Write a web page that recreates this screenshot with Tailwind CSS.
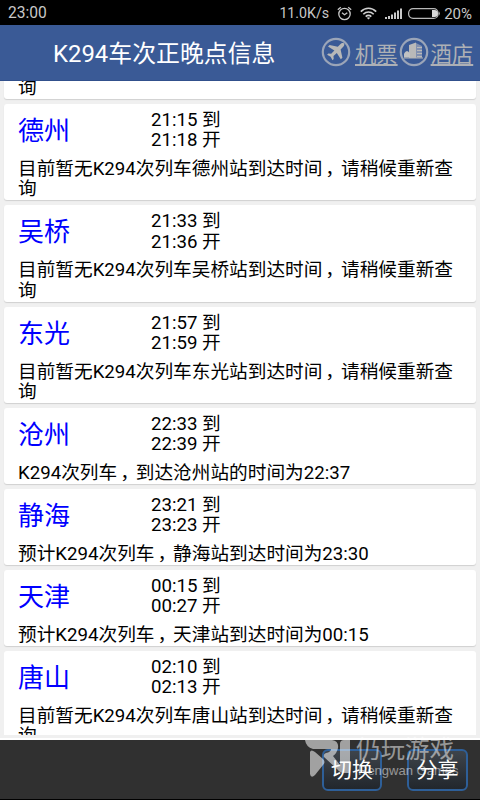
<!DOCTYPE html>
<html lang="zh-CN">
<head>
  <meta charset="UTF-8" />
  <meta name="viewport" content="width=device-width, initial-scale=1.0"/>
  <title>K294车次正晚点信息</title>
  <script src="https://cdn.jsdelivr.net/npm/@tailwindcss/browser@4"></script>
</head>
<body class="bg-black font-['Roboto','Noto_Sans_CJK_SC',sans-serif]">
  <div class="w-[480px] h-[800px] flex flex-col overflow-hidden relative">

    <!-- Status bar -->
    <div class="h-[25px] shrink-0 bg-black text-[#c8c8c8] flex items-center justify-between pl-2 pr-2 pt-[3px] text-[15px]">
      <span class="text-[15.600px]">23:00</span>
      <div class="flex items-center">
        <span class="mr-2 text-[14.200px]">11.0K/s</span>
        <svg class="w-[15px] h-[15px] mr-2 mb-0.5" viewBox="0 0 15 15" fill="none" stroke="#c8c8c8" stroke-width="1.3">
          <circle cx="7.5" cy="8" r="5.7"/>
          <path d="M5 6.8l2.5 2 2.8-2M.8 3.8L3.8 1.2M14.2 3.8l-3-2.6"/>
        </svg>
        <svg class="w-[17px] h-[13px] mr-2 mb-0.5" viewBox="0 0 17 13" fill="none" stroke="#d0d0d0" stroke-width="1.6">
          <path d="M.8 4.6c4.4-4.4 11-4.4 15.4 0M3.3 7.2c3-3 7.4-3 10.4 0M5.7 9.6c1.6-1.6 4-1.6 5.6 0"/>
          <path d="M8.5 12.6L6.7 10.8Q8.5 9.6 10.3 10.8Z" fill="#d0d0d0" stroke="none"/>
        </svg>
        <svg class="w-[17px] h-[11px] mr-1.5 mb-0.5" viewBox="0 0 17 11" fill="#c8c8c8">
          <path d="M0 9h2v2H0zM3 8h2v3H3zM6 6.5h2V11H6zM9 4.5h2V11H9zM12 2.5h2V11h-2zM15 .5h2V11h-2z"/>
        </svg>
        <svg class="w-8 h-[11px] mr-1 mb-0.5" viewBox="0 0 32 11">
          <rect x=".6" y=".6" width="29.5" height="9.8" rx="4.5" fill="none" stroke="#b8b8b8" stroke-width="1.2"/>
          <path d="M24 2h2.5a3.5 3.5 0 0 1 0 7H24z" fill="#d8d8d8"/>
          <path d="M31 3.5q1.5 2 0 4z" fill="#b8b8b8"/>
        </svg>
        <span>20%</span>
      </div>
    </div>

    <!-- Title bar -->
    <header class="h-14 shrink-0 bg-[#3a5a96] border-b border-[#31508c] flex items-center pl-[53px]">
      <h1 class="w-[268px] mt-0.5 text-[23.900px] leading-9 text-white whitespace-nowrap">K294车次正晚点信息</h1>
      <svg class="w-[30px] h-[30px] mb-0.5 shrink-0" viewBox="0 0 30 30">
        <circle cx="15" cy="15" r="13.2" fill="none" stroke="#9ba5b8" stroke-width="2.2"/>
        <path d="M23 6.5c-1-.9-2.7-.2-3.7.8L16.800 9.7 8.6 7.9 7 9.5l6.4 4-3.2 3.300-2.900-.2-1.200 1.200 3.500 1.900 1.900 3.500 1.200-1.200-.2-2.900 3.300-3.200 4 6.400 1.600-1.600-1.800-8.200 2.400-2.500c1-1 1.800-2.600 1-3.500z" fill="#b8b8b8"/>
      </svg>
      <a class="ml-1 mt-[5px] text-[21.300px] text-[#adb0b5] underline decoration-[1.500px] underline-offset-[2px] whitespace-nowrap">机票</a>
      <svg class="w-[30px] h-[30px] ml-px mb-0.5 shrink-0" viewBox="0 0 30 30">
        <circle cx="15" cy="15" r="13.2" fill="none" stroke="#9ba5b8" stroke-width="2.2"/>
        <path d="M10 8l7-2.5v15.500h-7z" fill="#b9b9b9"/>
        <path d="M17 6l6 3v12h-6z" fill="#8190b0"/>
        <path d="M18 10.500h5M18 13.500h5M18 16.500h5M18 19.500h5" stroke="#b9b9b9" stroke-width="1.2"/>
        <path d="M5 20.500v-4q3-5 6 0v4z" fill="#c2c2c2"/>
        <path d="M5 21h19" stroke="#b4b4b4"/>
      </svg>
      <a class="ml-0.5 mt-[5px] text-[21.300px] text-[#adb0b5] underline decoration-[1.500px] underline-offset-[2px] whitespace-nowrap">酒店</a>
    </header>

    <!-- Station list -->
    <main class="h-[654px] shrink-0 bg-[#f0f0f0] px-1 overflow-hidden text-black text-[18.670px] leading-[20.250px]">
      <section class="h-[18px] bg-white rounded-b-[3px] shadow-[0_1px_1px_#d0d0d0] pl-3.5 mb-[5px] flex items-end overflow-hidden">
        <p class="pb-px">询</p>
      </section>

      <section class="h-[96.300px] bg-white rounded-[3px] shadow-[0_1px_1px_#d0d0d0] px-3.5 pt-1.5 mb-[5px]">
        <div class="flex h-[49px]">
          <h2 class="w-[133px] text-[26px] leading-[43px] text-[#0000ff]">德州</h2>
          <div>21:15 到<br>21:18 开</div>
        </div>
        <p class="whitespace-nowrap">目前暂无K294次列车德州站到达时间<span class="relative left-[3px]">，</span>请稍候重新查<br>询</p>
      </section>

      <section class="h-[96.300px] bg-white rounded-[3px] shadow-[0_1px_1px_#d0d0d0] px-3.5 pt-1.5 mb-[5px]">
        <div class="flex h-[49px]">
          <h2 class="w-[133px] text-[26px] leading-[43px] text-[#0000ff]">吴桥</h2>
          <div>21:33 到<br>21:36 开</div>
        </div>
        <p class="whitespace-nowrap">目前暂无K294次列车吴桥站到达时间<span class="relative left-[3px]">，</span>请稍候重新查<br>询</p>
      </section>

      <section class="h-[96.300px] bg-white rounded-[3px] shadow-[0_1px_1px_#d0d0d0] px-3.5 pt-1.5 mb-[5px]">
        <div class="flex h-[49px]">
          <h2 class="w-[133px] text-[26px] leading-[43px] text-[#0000ff]">东光</h2>
          <div>21:57 到<br>21:59 开</div>
        </div>
        <p class="whitespace-nowrap">目前暂无K294次列车东光站到达时间<span class="relative left-[3px]">，</span>请稍候重新查<br>询</p>
      </section>

      <section class="h-[76px] bg-white rounded-[3px] shadow-[0_1px_1px_#d0d0d0] px-3.5 pt-1.5 mb-[5px]">
        <div class="flex h-[49px]">
          <h2 class="w-[133px] text-[26px] leading-[43px] text-[#0000ff]">沧州</h2>
          <div>22:33 到<br>22:39 开</div>
        </div>
        <p class="whitespace-nowrap">K294次列车<span class="relative left-[3px]">，</span>到达沧州站的时间为22:37</p>
      </section>

      <section class="h-[76px] bg-white rounded-[3px] shadow-[0_1px_1px_#d0d0d0] px-3.5 pt-1.5 mb-[5px]">
        <div class="flex h-[49px]">
          <h2 class="w-[133px] text-[26px] leading-[43px] text-[#0000ff]">静海</h2>
          <div>23:21 到<br>23:23 开</div>
        </div>
        <p class="whitespace-nowrap">预计K294次列车<span class="relative left-[3px]">，</span>静海站到达时间为23:30</p>
      </section>

      <section class="h-[76px] bg-white rounded-[3px] shadow-[0_1px_1px_#d0d0d0] px-3.5 pt-1.5 mb-[5px]">
        <div class="flex h-[49px]">
          <h2 class="w-[133px] text-[26px] leading-[43px] text-[#0000ff]">天津</h2>
          <div>00:15 到<br>00:27 开</div>
        </div>
        <p class="whitespace-nowrap">预计K294次列车<span class="relative left-[3px]">，</span>天津站到达时间为00:15</p>
      </section>

      <section class="h-[96.300px] bg-white rounded-[3px] px-3.5 pt-1.5">
        <div class="flex h-[49px]">
          <h2 class="w-[133px] text-[26px] leading-[43px] text-[#0000ff]">唐山</h2>
          <div>02:10 到<br>02:13 开</div>
        </div>
        <p class="whitespace-nowrap">目前暂无K294次列车唐山站到达时间<span class="relative left-[3px]">，</span>请稍候重新查<br>询</p>
      </section>
    </main>
    <div class="h-[5px] shrink-0 bg-[#f0f0f0] border-b-2 border-white"></div>

    <!-- Bottom toolbar -->
    <footer class="h-[59px] shrink-0 bg-[#303030] flex items-start justify-end gap-[25px] pt-[9px] pr-3">
      <button class="w-[60px] h-[42px] rounded-[6px] border-2 border-[#2e5f98] bg-linear-to-b from-[#3e444b] to-[#22272d] text-white text-[21px] leading-[38px] whitespace-nowrap flex justify-center">切换</button>
      <button class="w-[61px] h-[42px] rounded-[6px] border-2 border-[#2e5f98] bg-linear-to-b from-[#3e444b] to-[#22272d] text-white text-[21px] leading-[38px] whitespace-nowrap flex justify-center">分享</button>
    </footer>

    <!-- Watermark -->
    <div class="absolute left-[305px] top-[738px] text-white/50">
      <svg class="w-[46px] h-[41px]" viewBox="0 0 46 41" fill="#fff" fill-opacity=".55">
        <path d="M0 2h27q7 1 6 8-1 5-5 8l7 9V6q0-4 4-4h6v33h-6q-4 0-7-4L19 19q-1-3 2-4 5-1 5-4H8Q1 9 0 2z"/>
        <path d="M5 14q1-3 5 0l8 7q3 3 0 6l-8 10q-4 4-5-1z"/>
      </svg>
      <span class="absolute left-[51px] top-[-3px] text-[24.500px] leading-[29px] whitespace-nowrap">仍玩游戏</span>
      <span class="absolute left-[53px] top-[25px] text-[13px] leading-4 whitespace-nowrap font-['Liberation_Sans',sans-serif]">Rengwan Games</span>
    </div>
  </div>
</body>
</html>
